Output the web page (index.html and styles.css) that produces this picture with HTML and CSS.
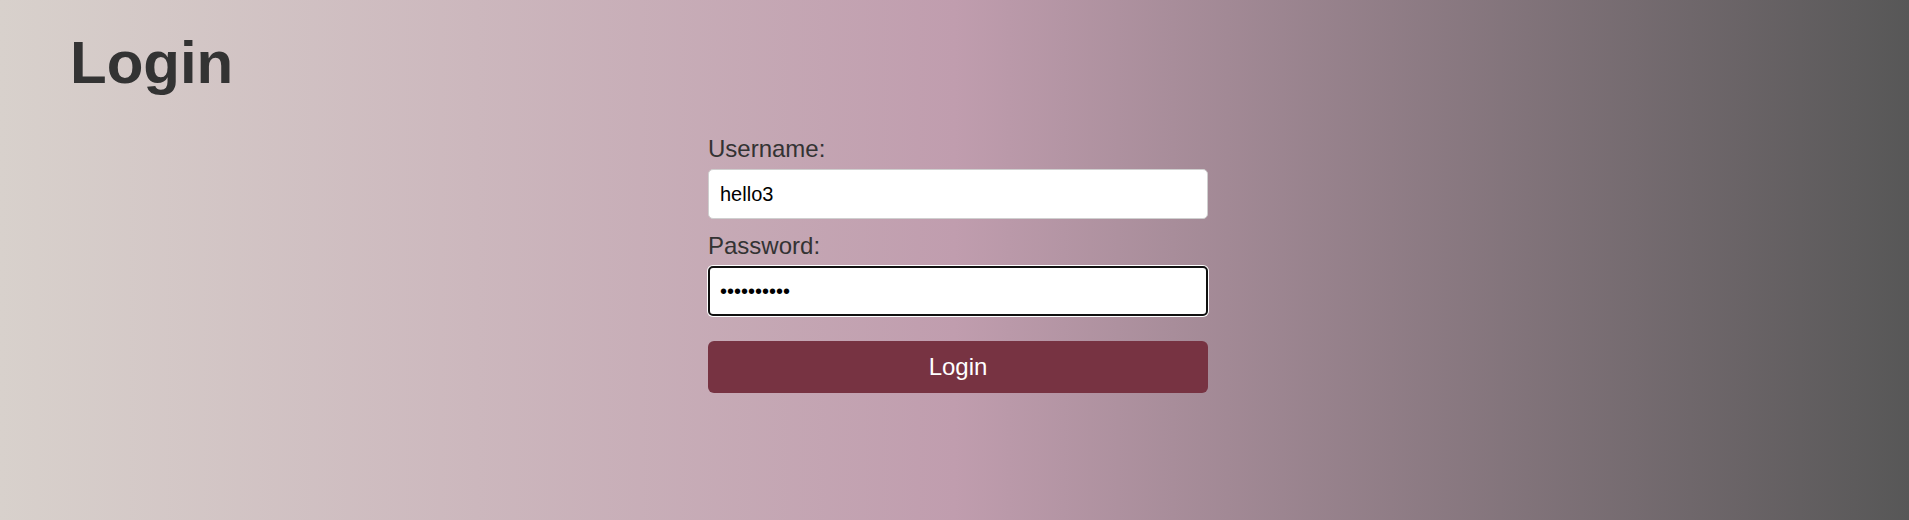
FILE: index.html
```html
<!DOCTYPE html>
<html lang="en">
<head>
<meta charset="utf-8">
<title>Login</title>
<link rel="stylesheet" href="styles.css">
</head>
<body>
  <header class="page-header">
    <h1 class="title">Login</h1>
  </header>
  <main class="main">
    <form class="login-form">
      <label class="field-label" for="username">Username:</label>
      <input class="field-input" id="username" type="text" value="hello3">
      <label class="field-label" for="password">Password:</label>
      <input class="field-input field-input--focused" id="password" type="password" value="0123456789">
      <button class="submit-btn" type="button">Login</button>
    </form>
  </main>
</body>
</html>
```

FILE: styles.css
```css
html, body {
  margin: 0;
  padding: 0;
  height: 100%;
}

body {
  font-family: "Liberation Sans", Arial, sans-serif;
  background: linear-gradient(to right, #d8d1cc 0%, #c09dae 50%, #575757 100%);
  color: #333;
}

.page-header {
  padding: 28px 0 0 70px;
}

.title {
  margin: 0;
  font-size: 60px;
  font-weight: bold;
  color: #333;
}

.main {
  display: flex;
  justify-content: center;
  padding-left: 7px;
  margin-top: 38px;
}

.login-form {
  width: 500px;
  display: flex;
  flex-direction: column;
}

.field-label {
  display: block;
  font-size: 24px;
  color: #333;
  margin-bottom: 6px;
}

.field-input {
  box-sizing: border-box;
  width: 500px;
  height: 50px;
  margin: 0 0 13px 0;
  padding: 0 11px;
  font-family: "Liberation Sans", Arial, sans-serif;
  font-size: 20px;
  color: #000;
  background: #fff;
  border: 1px solid #cfcfcf;
  border-radius: 5px;
  outline: none;
}

.field-input--focused {
  border: 2px solid #101010;
  padding: 0 10px;
  box-shadow: 0 0 0 1px #fff;
}

.submit-btn {
  margin-top: 12px;
  width: 500px;
  padding: 12px 0;
  font-family: "Liberation Sans", Arial, sans-serif;
  font-size: 24px;
  color: #fff;
  background: #773342;
  border: none;
  border-radius: 6px;
  cursor: pointer;
}
```
